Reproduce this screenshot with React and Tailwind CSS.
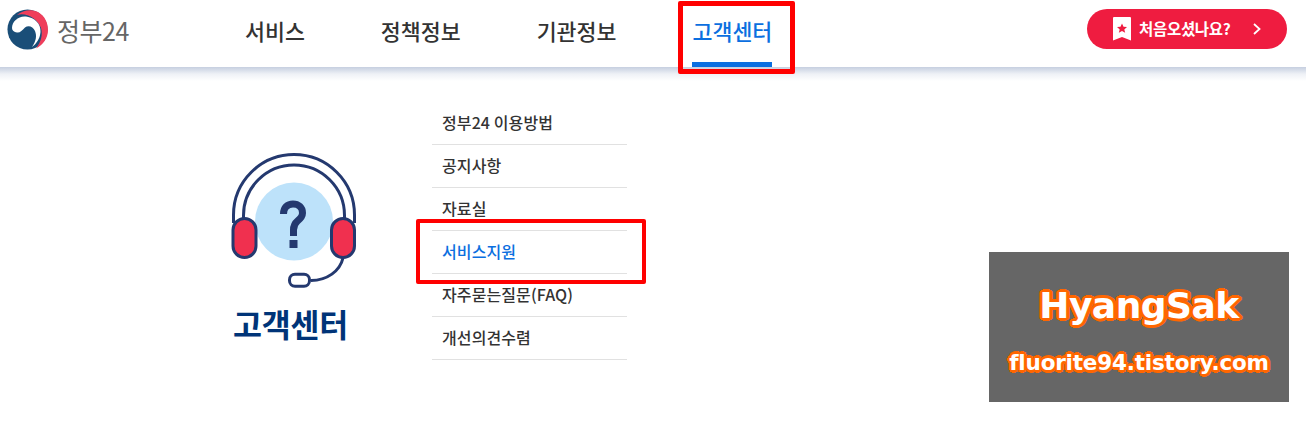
const font = "font-['Noto_Sans_CJK_KR','Noto_Sans',sans-serif]";

function Logo() {
  return (
    <svg width="42" height="42" viewBox="0 0 42 42" className="shrink-0">
      <circle cx="20.500" cy="20.500" r="20" fill="#1a4e78" />
      <path d="M10 6 C16 1 24 0 31 3 C38 7 41 14 41 21 C41 29 36 36 29 39.500 C34 33 36 26 34 19 C31 10 19 3 10 6 Z" fill="#ef3e5b" />
      <path d="M5 19 C5 12 12 6.500 19 7.500 C28 8.500 34 15 33.500 23 C33 30 29 35 25 38 C29 32 30 27 28 22 C26 17 21 16 18 18.500 C15 21.500 13 24 10 23.500 C7 23 5 21.500 5 19 Z" fill="#ffffff" />
    </svg>
  );
}

function Headset() {
  return (
    <svg width="128" height="140" viewBox="0 0 128 140" fill="none" className="shrink-0">
      <circle cx="64" cy="68.500" r="39" fill="#bde2fa" />
      <path d="M3.500 70 V62 A60.500 60.500 0 0 1 124.500 62 V70" stroke="#24396f" strokeWidth="3" />
      <path d="M13.500 70 V62.500 A50.500 50.500 0 0 1 114.500 62.500 V70" stroke="#24396f" strokeWidth="3" />
      <rect x="3" y="65.500" width="23" height="39" rx="11.500" fill="#f0304f" stroke="#24396f" strokeWidth="3" />
      <rect x="101.500" y="65.500" width="23" height="39" rx="11.500" fill="#f0304f" stroke="#24396f" strokeWidth="3" />
      <path d="M113 105 C110 118 97 127.500 81 127.500" stroke="#24396f" strokeWidth="3" />
      <rect x="59.500" y="121.200" width="20" height="12" rx="5.500" fill="#fff" stroke="#24396f" strokeWidth="3" />
      <path d="M53.500 61 C53.500 54.500 57.500 51 63 51 C68.500 51 72.500 54.500 72.500 60 C72.500 64 70 66 67.500 68 C64.500 70.500 63.500 72.500 63.500 77 V83" stroke="#24396f" strokeWidth="7" />
      <rect x="59.500" y="87" width="8" height="8" fill="#24396f" />
    </svg>
  );
}

const nav = ["서비스", "정책정보", "기관정보", "고객센터"];
const menu = ["정부24 이용방법", "공지사항", "자료실", "서비스지원", "자주묻는질문(FAQ)", "개선의견수렴"];

export default function App() {
  return (
    <div className={`relative h-[421px] w-[1306px] overflow-hidden bg-white ${font}`}>
      <header className="flex h-[67px] items-start bg-white pl-[7px] pr-[19px]">
        <div className="mt-[9px] flex h-[42px] w-[238px] items-center">
          <Logo />
          <span className="ml-[8px] text-[25px] leading-none tracking-[-0.5px] text-[#666666]">정부24</span>
        </div>
        <nav className="flex h-full gap-[76px]">
          {nav.map((n, i) => (
            <a key={n} className={`h-[67px] w-max border-b-[5px] pt-[15px] text-[21.700px] font-medium leading-[32px] ${i === 3 ? "border-[#0b6fe0] text-[#0b6fe0]" : "border-transparent text-[#333333]"}`}>{n}</a>
          ))}
        </nav>
        <button className="ml-auto mt-[9px] flex h-[40px] w-[200px] items-center rounded-full bg-[#ef1c40] pl-[26px] pr-[25px] text-white">
          <svg width="18" height="24" viewBox="0 0 18 24" className="shrink-0">
            <path d="M0 1 Q0 0 1 0 H17 Q18 0 18 1 V23.500 L9 20 L0 23.500 Z" fill="#fff" />
            <path d="M9 6.500 L10.500 9.800 L14 10.100 L11.300 12.400 L12.200 15.800 L9 14 L5.800 15.800 L6.700 12.400 L4 10.100 L7.500 9.800 Z" fill="#ef1c40" />
          </svg>
          <span className="ml-[8px] text-[15.500px] font-bold tracking-[-0.3px]">처음오셨나요?</span>
          <svg width="10" height="14" viewBox="0 0 10 14" fill="none" className="ml-auto">
            <path d="M2 2 L7.500 7 L2 12" stroke="#fff" strokeWidth="1.800" />
          </svg>
        </button>
      </header>
      <div className="h-[14px] bg-gradient-to-b from-[#c6cfe0] via-[#eef1f6] to-white" />

      <main className="-mt-[14px] flex pl-[230px] pt-[34px]">
        <div className="flex w-[202px] flex-col pt-[52px]">
          <div className="w-[128px]"><Headset /></div>
          <h2 className="mt-[10px] w-[116px] pl-[3px] text-[31.500px] font-bold leading-[40px] tracking-[-0.2px] text-[#003478] whitespace-nowrap">고객센터</h2>
        </div>
        <ul className="w-[195px] pt-[1px]">
          {menu.map((m, i) => (
            <li key={m} className={`flex h-[43px] items-center border-b border-[#e1e1e1] pb-[2px] pl-[10px] text-[16px] font-medium tracking-[0.1px] ${i === 3 ? "text-[#0b6fe0]" : "text-[#333333]"}`}>{m}</li>
          ))}
        </ul>
      </main>

      <div className="pointer-events-none absolute left-[678px] top-[1px] h-[73px] w-[117px] rounded-[2px] border-[5px] border-[#ff0000]" />
      <div className="pointer-events-none absolute left-[416px] top-[219px] h-[65px] w-[230px] rounded-[2px] border-[4px] border-[#ff0000]" />

      <div className="absolute left-[989px] top-[252px] flex h-[150px] w-[300px] flex-col items-center bg-[#666666] font-['DejaVu_Sans',sans-serif] font-bold text-white">
        <span className="mt-[30px] text-[36px] leading-[48px] tracking-[-0.5px] [text-shadow:3px_0_#ff6600,-3px_0_#ff6600,0_3px_#ff6600,0_-3px_#ff6600,2px_2px_#ff6600,-2px_2px_#ff6600,2px_-2px_#ff6600,-2px_-2px_#ff6600,3px_1px_#ff6600,-3px_1px_#ff6600,3px_-1px_#ff6600,-3px_-1px_#ff6600]">HyangSak</span>
        <span className="mt-[20px] text-[21.500px] leading-[26px] tracking-[-0.2px] [text-shadow:3px_0_#ff6600,-3px_0_#ff6600,0_3px_#ff6600,0_-3px_#ff6600,2px_2px_#ff6600,-2px_2px_#ff6600,2px_-2px_#ff6600,-2px_-2px_#ff6600]">fluorite94.tistory.com</span>
      </div>
    </div>
  );
}
